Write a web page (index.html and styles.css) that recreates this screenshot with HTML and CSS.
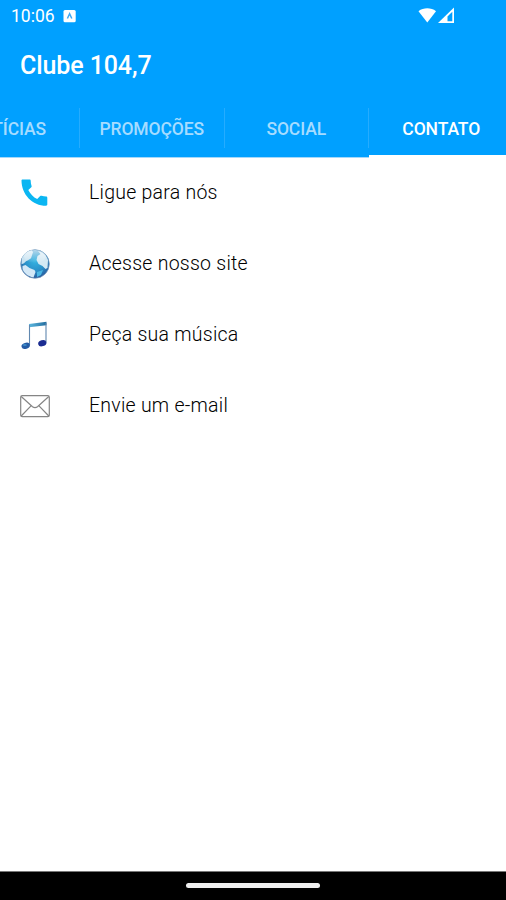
FILE: index.html
```html
<!DOCTYPE html>
<html lang="pt-BR">
<head>
    <meta charset="UTF-8">
    <meta name="viewport" content="width=device-width, initial-scale=1.0">
    <title>Clube 104,7</title>
    <link rel="stylesheet" href="styles.css">
</head>
<body>
<header class="header">
    <div class="status-bar">
        <span class="status-time">10:06</span>
        <svg class="status-app" width="13" height="13" viewBox="0 0 13 13">
            <rect x="0.5" y="0" width="12.2" height="12.2" rx="1.5" fill="#fff"/>
            <path d="M4.400 8.500 6.600 3.700l2.200 4.800" fill="none" stroke="#3ea8f5" stroke-width="1.500"/>
        </svg>
        <svg class="status-signal" width="38" height="18" viewBox="0 0 38 18">
            <path d="M1.500 4.200C6.500.4 14 .4 19 4.200L10.300 15.500z" fill="#fff"/>
            <path d="M21 16 37 0.500V16z" fill="#fff"/>
            <path d="M30.500 9.500 35.300 4.700V14.300H30.500z" fill="#00a0ff"/>
        </svg>
    </div>
    <h1 class="title">Clube 104,7</h1>
    <nav class="tabs">
        <a class="tab"><span>NOTÍCIAS</span></a>
        <a class="tab"><span>PROMOÇÕES</span></a>
        <a class="tab"><span>SOCIAL</span></a>
        <a class="tab active"><span>CONTATO</span></a>
    </nav>
</header>

<main class="contacts">
    <div class="contact">
        <svg class="contact-icon" width="30" height="30" viewBox="0 0 30 30">
            <path d="M1.500 2.500C1.500 1.800 2 1.500 2.700 1.500H9.500c.8 0 1.200.4 1.200 1.200 0 1.900.3 3.700.9 5.200.2.500 0 1-.3 1.300L8.300 12c2 3.900 5 7.100 8.900 9.100l3-3c.4-.4.9-.5 1.400-.3 1.500.5 3 .8 4.500.8.700 0 1.200.5 1.200 1.200v6.800c0 .7-.5 1.200-1.200 1.200C12.500 27.800 1.500 16.500 1.500 2.500z" fill="#0bb6f2"/>
        </svg>
        <span class="contact-name">Ligue para nós</span>
    </div>
    <div class="contact">
        <svg class="contact-icon" width="30" height="30" viewBox="0 0 30 30">
            <defs>
                <radialGradient id="sea" cx="50%" cy="38%" r="62%">
                    <stop offset="0" stop-color="#35b5e3"/>
                    <stop offset="0.6" stop-color="#2b8fc8"/>
                    <stop offset="1" stop-color="#28599c"/>
                </radialGradient>
                <linearGradient id="shine" x1="0" y1="0" x2="0" y2="1">
                    <stop offset="0" stop-color="#fff" stop-opacity="0.65"/>
                    <stop offset="1" stop-color="#fff" stop-opacity="0"/>
                </linearGradient>
            </defs>
            <circle cx="15" cy="15" r="14.300" fill="url(#sea)" stroke="#7796b8" stroke-width="0.7"/>
            <path d="M2 9C4 4.500 8 1.500 12 1.200l1 2-1 3-1 3-3 2-2 1-2 2-2.500 1z" fill="#c9e3f1"/>
            <path d="M18 2c5 1 8.500 4 10 9l-.5 8-2 1-3-3-4-2-2-4 1-4 3-2z" fill="#d4e9f4"/>
            <path d="M2.500 17l3-1 4 3 5 2 1 2-2 5.500C8 27.500 4 24 2.500 20z" fill="#d3e8f7"/>
            <path d="M17 23l6-2-2 5-4 2z" fill="#4ab7e4"/>
            <ellipse cx="15" cy="7.500" rx="11" ry="6.500" fill="url(#shine)"/>
        </svg>
        <span class="contact-name">Acesse nosso site</span>
    </div>
    <div class="contact">
        <svg class="contact-icon" width="30" height="30" viewBox="0 0 30 30">
            <defs>
                <linearGradient id="beam" x1="0" y1="0" x2="1" y2="0">
                    <stop offset="0" stop-color="#5cb8df"/>
                    <stop offset="1" stop-color="#226c9e"/>
                </linearGradient>
            </defs>
            <path d="M9 4 26.500 1.800V5.200L9 7.200z" fill="url(#beam)"/>
            <path d="M9.500 5V25M26 3V22.500" stroke="#6188b0" stroke-width="1.100"/>
            <ellipse cx="5.700" cy="25.800" rx="4.300" ry="3" transform="rotate(-17 5.700 25.800)" fill="#245ba5"/>
            <ellipse cx="22.300" cy="23.200" rx="4.200" ry="3" transform="rotate(-17 22.300 23.200)" fill="#1b2c91"/>
            <ellipse cx="4.800" cy="25" rx="2" ry="1" fill="#3e8dc8"/>
        </svg>
        <span class="contact-name">Peça sua música</span>
    </div>
    <div class="contact">
        <svg class="contact-icon" width="30" height="30" viewBox="0 0 30 30">
            <g fill="none" stroke="#858585" stroke-width="1.200">
                <rect x="0.700" y="4.700" width="28.600" height="21" rx="1.500"/>
                <path d="M1.200 5.500 12.500 15.800q2.500 1.700 5 0L28.800 5.500M1.200 25 11 14.800M28.800 25 19 14.800"/>
            </g>
        </svg>
        <span class="contact-name">Envie um e-mail</span>
    </div>
</main>

<footer class="nav-bar">
    <div class="nav-handle"></div>
</footer>
</body>
</html>
```
FILE: styles.css
```css
body {
    font-family: Roboto, 'Liberation Sans', sans-serif;
    background-color: #fff;
    margin: 0;
    height: 100vh;
    display: flex;
    flex-direction: column;
    overflow: hidden;
}

.header {
    background-color: #00a0ff;
    height: 157px;
    color: #fff;
}

.status-bar {
    display: flex;
    align-items: center;
    height: 32px;
    padding: 0 51px 0 11px;
}

.status-time {
    font-size: 17.5px;
    width: 52px;
}

.status-signal {
    margin-left: auto;
}

.title {
    font-size: 25px;
    font-weight: 500;
    letter-spacing: -0.1px;
    line-height: 68px;
    height: 68px;
    margin: 0;
    padding-left: 20px;
}

.tabs {
    display: flex;
    height: 58px;
    margin-left: -64.5px;
    overflow: hidden;
}

.tab {
    display: flex;
    flex: 0 0 144.5px;
    box-sizing: border-box;
    padding: 8px 0 9px;
    font-size: 17.5px;
    font-weight: 500;
    letter-spacing: -0.1px;
    color: #a6dcff;
    border-bottom: 1px solid #a5d8fa;
}

.tab span {
    flex: 1;
    height: 40px;
    line-height: 43px;
    text-align: center;
    border-right: 1px solid #25acff;
}

.tab.active {
    color: #fff;
    border-bottom: 3px solid #fff;
}

.tab.active span {
    border-right: none;
}

.contacts {
    flex: 1;
    padding-top: 1px;
}

.contact {
    display: flex;
    align-items: center;
    height: 70.8px;
    padding-left: 20px;
}

.contact-icon {
    margin-right: 39px;
}

.contact-name {
    font-size: 19.5px;
    font-weight: 300;
    line-height: 24px;
    letter-spacing: 0.25px;
    color: #000;
}

.nav-bar {
    display: flex;
    justify-content: center;
    align-items: center;
    box-sizing: border-box;
    height: 29px;
    padding-bottom: 1px;
    background-color: #000;
    border-top: 1px solid #777;
}

.nav-handle {
    width: 134px;
    height: 5px;
    border-radius: 3px;
    background-color: #eee;
}
```
